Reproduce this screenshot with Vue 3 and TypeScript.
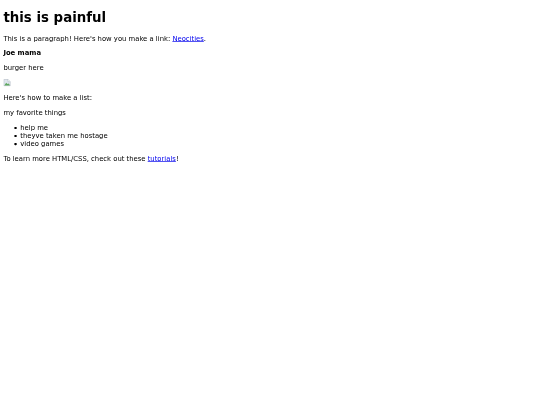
<script setup lang="ts">
const items: string[] = ['help me', 'theyve taken me hostage', 'video games']
</script>

<template>
  <main class="page">
    <h1>this is painful</h1>
    <p>This is a paragraph! Here's how you make a link: <a href="#">Neocities</a>.</p>
    <p><strong>Joe mama</strong></p>
    <p>burger here</p>
    <p class="pic">
      <svg width="11" height="11" viewBox="0 0 16 16" role="img" aria-label="broken image">
        <path d="M1 1h9l5 5v9H1z" fill="#dfe6ee" stroke="#a3acb8" />
        <path d="M10 1v5h5" fill="#fff" stroke="#a3acb8" />
        <path d="M2 14l4-6 3 3 3-1 2 4z" fill="#5fa85f" />
      </svg>
    </p>
    <p>Here's how to make a list:</p>
    <p>my favorite things</p>
    <ul>
      <li v-for="item in items" :key="item">{{ item }}</li>
    </ul>
    <p>To learn more HTML/CSS, check out these <a href="#">tutorials</a>!</p>
  </main>
</template>

<style scoped>
.page {
  width: 790px;
  padding: 14.6px 5px 0;
  font-family: "DejaVu Sans", Verdana, sans-serif;
  font-size: 10.12px;
  line-height: 12px;
  color: #000;
  transform: scale(0.675);
  transform-origin: 0 0;
  filter: blur(0.25px);
}
h1 {
  margin: 0 0 13.4px;
  font-size: 19.8px;
  line-height: 23px;
  font-weight: 700;
}
p {
  margin: 0 0 10px;
}
.pic {
  height: 12px;
}
.pic svg {
  display: block;
}
ul {
  margin: 0 0 10px;
  padding-left: 25px;
  list-style: none;
}
li {
  position: relative;
}
li::before {
  content: "";
  position: absolute;
  left: -9px;
  top: 5px;
  width: 3.5px;
  height: 3.5px;
  border-radius: 50%;
  background: #000;
}
a {
  color: #0000ee;
}
</style>
